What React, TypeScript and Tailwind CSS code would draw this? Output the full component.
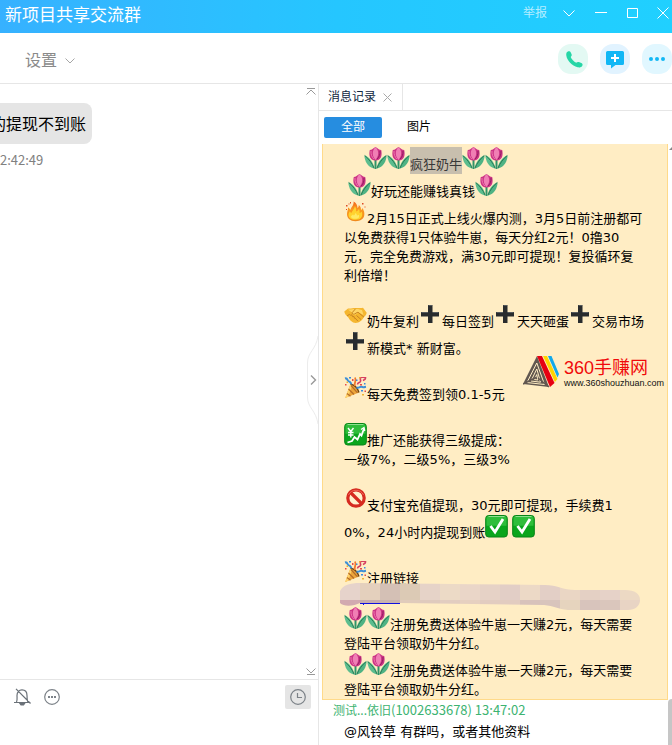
import { Fragment, type ReactNode } from "react";

type EmojiName = "tulip" | "fire" | "handshake" | "plus" | "party" | "chart" | "ban" | "check";

const E = "block h-[23px] w-[23px] shrink-0";

function Tulip() {
  return (
    <svg viewBox="0 1 23 23" className={E}>
      <path d="M11.500 12v11" stroke="#2f9468" strokeWidth="2" />
      <path d="M.3 9.200c.5 6 3 11.500 10 13.500C9.900 17 5.500 11 .3 9.200z" fill="#5cbd8e" />
      <path d="M22.700 9.200c-.5 6-3 11.500-10 13.500.4-5.700 4.800-11.700 10-13.500z" fill="#4fb384" />
      <path d="M.8 9.600c4 3.400 7.200 7.400 9.200 12.400M22.200 9.600c-4 3.400-7.200 7.400-9.200 12.400" stroke="#287a55" fill="none" />
      <path d="M5.800 4C8 4 9 2.500 11.500 1 14 2.500 15 4 17.200 4c1 4.500.6 10.500-5.700 10.500S4.800 8.500 5.800 4z" fill="#cc3485" />
      <path d="M11.500 1.300c3.600 3.200 3.600 8.500 0 12.700-3.600-4.200-3.600-9.500 0-12.700z" fill="#f07fb4" />
      <path d="M7 5C6.700 8 7.800 11 9.800 13" stroke="#ee77ae" fill="none" />
      <path d="M16 5c.3 3-.8 6-2.800 8" stroke="#8f1e60" fill="none" />
    </svg>
  );
}

function Fire() {
  return (
    <svg viewBox="0 1 23 23" className={E}>
      <defs>
        <linearGradient id="flame" x1="0" y1="0" x2="0" y2="1">
          <stop offset="0" stopColor="#f0641e" />
          <stop offset=".4" stopColor="#fb9a1f" />
          <stop offset="1" stopColor="#f08a1c" />
        </linearGradient>
      </defs>
      <path d="M3 14c0-2.500 1.200-3.800 1-6.500 1.500.8 2 1.500 2.300 2.500C7 7 10 5.500 9.600 1.500 12.500 3 13.500 5.500 13.500 8c.8-.5 1.300-1.500 1.300-3 2 1.500 2.200 3.300 2.200 5 .8-.4 1.300-1 1.600-2 1.400 2.800 2 4.500 1.700 7-.6 4-3.700 6.200-8.800 6.200S3 18.500 3 14z" fill="url(#flame)" />
      <path d="M4.500 15c0-1.700.8-2.600 1.300-3.800.8.600 1 1.200 1.300 2C8.200 11 10.700 8.700 10.900 6c1.300 1.800 1.300 3.800 1.200 5.500 1.400-.4 2.300-1.300 2.800-2.500.8 1.500.8 2.800.7 4 1-.3 1.700-.8 2.200-1.500 1.300 4.500 0 8.300-6.200 8.300-4.700 0-7-1.800-7.100-4.800z" fill="#ffd22e" />
      <path d="M7 16.500c.4-1.300 1.300-1 2-2 .4.500.6.500.7 1 1-.6 1.500-1.400 1.700-2.500 1.200.8 1.500 1.500 1.500 2.500.8-.2 1.300-.5 1.900-.8 1 2.600-.3 4.100-3.600 4.100-2.600 0-4.100-.8-4.200-2.300z" fill="#ffe964" />
      <path d="M2 5h1.500v1.500H2zM6 2h1v1.500H6zM18 3h1.500v1.500H18zM2 9h1v1H2zM20.500 6.500h1v1h-1zM4.500 3.500h1v1h-1z" fill="#dd4a24" />
    </svg>
  );
}

function Handshake() {
  return (
    <svg viewBox="0 0 23 23" className={E}>
      <path d="M.3 7.500 4 4.500c3 .3 5-.6 7.500-.5 3-.3 5 .4 7.500-.3l3.700 5c-.3 1.600-1.400 3.300-3 4.600-1.500 3.200-4.600 5.700-8 5.700-3.600-.2-6-3-7.700-6C2 11.500.5 9.500.3 7.500z" fill="#f5b62f" />
      <path d="M4 5.500c3 .3 5-.6 7.500-.5 3-.3 4.500.6 6.500 1l1.500 5-5-2.500-3 2c-1.500 1-3.300.3-3-1.400" fill="#ffd666" />
      <path d="M11.500 4.800 8 8.800c.3 1.700 2.400 1.900 4 .3l2-.9 6 5M12.500 11.500l4.500 4M10.500 13.500l3.500 3.700M3 12l2.500-1.700 1 1 1.300-.5.7 1.800 1.500-.1.500 2" stroke="#c98422" strokeWidth="1" fill="none" />
    </svg>
  );
}

function Plus() {
  return (
    <svg viewBox="0 0 23 23" className={E}>
      <path d="M9 1h4.500v7H20v4.500h-6.500v6.500H9v-6.500H2V8h7z" fill="#292c2e" />
      <path d="M9.500 1.500h3.500M2.500 8.500H9M13.500 8.500h6" stroke="#555a5d" />
    </svg>
  );
}

function Party() {
  return (
    <svg viewBox="0 1 23 23" className={E}>
      <path d="M6.500 8 1.200 22 15 16.500C13 12.500 10 9.500 6.500 8z" fill="#eda63b" />
      <path d="M6.500 8 1.200 22l3-1.200 4-11.500z" fill="#ffd36b" />
      <path d="m4.500 13 5.500 5.500M3 17.500l3.500 2.700M7 9.500l6.500 7.400" stroke="#b56c28" strokeWidth="1.200" />
      <path d="M6.500 8c4 1 7 4 8.500 8.500" stroke="#70430f" strokeWidth="1.300" fill="none" />
      <path d="M1 2.500c3-1 2 3 4 3s1 2.500 3 2M12.500 11.500c3 1.500 3-2 6-.5 1.500.5 2 0 3.500-.2" stroke="#3d8fd6" strokeWidth="2" fill="none" />
      <path d="M11 10c-1.500-4 2-4 0-8.500" stroke="#f07a2d" strokeWidth="1.800" fill="none" />
      <path d="M13.500 8.500c0-3 4-1 3-4.500s2-3 5-2.500c.5 2-1.500 2.500-2.500 3" stroke="#d63f62" strokeWidth="1.600" fill="none" />
      <path d="M5 1h2v1.500H5zM12 3.500h1.500V5H12zM20 7h1.500v1.500H20zM17 14h2v1.500h-2z" fill="#3a8add" />
      <path d="M8 3h1.500v2H8zM16 8h2v1.500h-2zM20.500 14.500H22V16h-1.500zM1 8h1.500v1.500H1z" fill="#e64a4a" />
      <path d="M18 18h2v1.500h-2zM2.500 5.500H4V7H2.500zM15 1h1.500v1.500H15z" fill="#efb332" />
    </svg>
  );
}

function GreenTile({ children }: { children: ReactNode }) {
  return (
    <svg viewBox="0 0 23 23" className={E} fill="none">
      <rect x=".7" y=".5" width="21.600" height="21.500" rx="3" fill="#0aa51c" stroke="#078417" />
      <path d="M3 1.300h17a1.500 1.500 0 0 1 1.500 1.500v8h-20v-8A1.500 1.500 0 0 1 3 1.300z" fill="#2fbd3b" />
      <path d="M3.500 1.500h16" stroke="#8ee08f" />
      {children}
    </svg>
  );
}

function Ban() {
  return (
    <svg viewBox="0 0 23 23" className={E}>
      <circle cx="12" cy="10" r="8.200" fill="#fff0cd" stroke="#d62a20" strokeWidth="3.200" />
      <path d="m6.500 4.500 11 11" stroke="#d62a20" strokeWidth="3.200" />
      <path d="M4.500 7a8.300 8.300 0 0 1 15 0" stroke="#f0665a" fill="none" />
    </svg>
  );
}

function Emoji({ name }: { name: EmojiName }) {
  switch (name) {
    case "tulip":
      return <Tulip />;
    case "fire":
      return <Fire />;
    case "handshake":
      return <Handshake />;
    case "plus":
      return <Plus />;
    case "party":
      return <Party />;
    case "ban":
      return <Ban />;
    case "chart":
      return (
        <GreenTile>
          <path d="m4 5 2.800 3.500L9.500 5M6.800 8.500v6M4 9.500h5.500M4 12h5.500" stroke="#fff" strokeWidth="1.400" />
          <path d="M3.500 19.500 8 18l2.500-4 3 2.500L16 11l1.500 1.500L20 5.500" stroke="#fff" strokeWidth="1.800" />
          <path d="m17 6.500 3-2 .8 3.500" stroke="#fff" strokeWidth="1.300" />
        </GreenTile>
      );
    case "check":
      return (
        <GreenTile>
          <path d="m5.500 11 4.500 6 8-13" stroke="#fff" strokeWidth="2.800" />
        </GreenTile>
      );
  }
}

// a string is text, { e } is an inline emoji, { mark } is selected text
type Part = string | { e: EmojiName } | { mark: string };
interface Line {
  parts: Part[];
  indent?: string;
}

const tulip: Part = { e: "tulip" };
const plus: Part = { e: "plus" };

const LINES: Line[] = [
  { parts: [tulip, tulip, { mark: "疯狂奶牛" }, tulip, tulip], indent: "pl-5" },
  { parts: [tulip, "好玩还能赚钱真钱", tulip], indent: "pl-1" },
  { parts: [{ e: "fire" }, "2月15日正式上线火爆内测，3月5日前注册都可"] },
  { parts: ["以免费获得1只体验牛崽，每天分红2元！0撸30"] },
  { parts: ["元，完全免费游戏，满30元即可提现！复投循环复"] },
  { parts: ["利倍增！"] },
  { parts: [] },
  { parts: [{ e: "handshake" }, "奶牛复利", plus, "每日签到", plus, "天天砸蛋", plus, "交易市场"] },
  { parts: [plus, "新模式* 新财富。"] },
  { parts: [] },
  { parts: [{ e: "party" }, "每天免费签到领0.1-5元"] },
  { parts: [] },
  { parts: [{ e: "chart" }, "推广还能获得三级提成："] },
  { parts: ["一级7%，二级5%，三级3%"] },
  { parts: [] },
  { parts: [{ e: "ban" }, "支付宝充值提现，30元即可提现，手续费1"] },
  { parts: ["0%，24小时内提现到账", { e: "check" }, " ", { e: "check" }] },
  { parts: [] },
  { parts: [{ e: "party" }, "注册链接"] },
  { parts: [] },
  { parts: [tulip, tulip, "注册免费送体验牛崽一天赚2元，每天需要"] },
  { parts: ["登陆平台领取奶牛分红。"] },
  { parts: [tulip, tulip, "注册免费送体验牛崽一天赚2元，每天需要"] },
  { parts: ["登陆平台领取奶牛分红。"] },
];

function MessageLine({ line }: { line: Line }) {
  const hasEmoji = line.parts.some((p) => typeof p !== "string" && "e" in p);
  return (
    <div className={`flex whitespace-pre ${hasEmoji ? "h-[27px]" : "h-[19px]"} ${line.indent ?? ""}`}>
      {line.parts.map((p, i) => (
        <Fragment key={i}>
          {typeof p === "string" ? (
            <span className="self-end">{p}</span>
          ) : "e" in p ? (
            <Emoji name={p.e} />
          ) : (
            <mark className="flex items-end bg-[#c8bfae] text-[#383838]">{p.mark}</mark>
          )}
        </Fragment>
      ))}
    </div>
  );
}

const MOSAIC_TOP = ["#e6d3cb", "#e4d0bd", "#d4c0b5", "#dccab5", "#e6d3c8", "#ecdac6", "#ead6c8", "#e6d2c6", "#e2cec6", "#ecd9c6", "#e3cfc6", "#ead6c4", "#e4d0c4", "#e6d2c8", "#ecd9c4"];
const MOSAIC_BOTTOM = ["#d2aab0", "#c8aeae", "#c9b3ae", "#e0cbbb", "#dfcabd", "#e2cdc0", "#e6d0c0", "#e2ccc0", "#e2ccc0", "#d8c2bb", "#d8c4bc", "#e6d4be", "#d8c4bc", "#dac6bc", "#e8d4c4"];

function LinkMosaic() {
  return (
    <svg viewBox="0 0 300 29" className="absolute left-[17px] top-[439px] h-[29px] w-[300px]">
      <clipPath id="smear">
        <path d="M0 8C3 2 10 0 20 0 80 1 140 1 205 2c12 0 18 5 30 5h50c10 0 15 4 15 10s-5 10-12 10h-60c-10-1-14-4-24-5L60 20 20 20C14 23 4 24 0 20z" />
      </clipPath>
      <g clipPath="url(#smear)">
        {MOSAIC_TOP.map((c, i) => (
          <rect key={i} x={i * 20} y="0" width="20" height="17" fill={c} />
        ))}
        {MOSAIC_BOTTOM.map((c, i) => (
          <rect key={i} x={i * 20} y="17" width="20" height="12" fill={c} />
        ))}
      </g>
      <path d="M20 20.500h40M23.500 20v2" stroke="#1010e0" />
    </svg>
  );
}

function Watermark() {
  return (
    <div className="absolute right-[3px] top-[211px] flex items-center gap-[5px] whitespace-nowrap">
      <svg viewBox="0 0 36 33" className="h-[33px] w-9">
        <path d="M14 1 0 29l26 3z" fill="#625850" />
        <path d="M13.800 8 4 27.500 21.500 29.500zM13.800 14 8 26l9.500 1.200zM13.800 19.500 11.300 24.500l3.500.5z" stroke="#ffedc4" strokeWidth="1" fill="none" />
        <path d="m0 29 13-6.500M26 32l-11-9" stroke="#625850" strokeWidth="1.500" />
        <path d="M14 1h5l12.500 27-4.500 4z" fill="#e60012" />
        <path d="M20 1h4l10.500 23-2.600 3z" fill="#ffd400" />
        <path d="M25 1h3.500L36 19l-1.500 3.500z" fill="#13a9ea" />
      </svg>
      <div className="flex flex-col pt-1">
        <span className="font-['Liberation_Sans','Noto_Sans_CJK_SC',sans-serif] text-[18px] leading-[19px] text-[#f00a0a]">360手赚网</span>
        <span className="font-['Liberation_Sans',sans-serif] text-[9px] leading-[10px] text-[#111]">www.360shouzhuan.com</span>
      </div>
    </div>
  );
}

function TitleBar() {
  return (
    <header className="flex h-[33px] shrink-0 items-center justify-between bg-linear-to-r from-[#36b1ff] via-[#25c6ff] to-[#20d0ff] pl-[5px] pr-[3px] text-white">
      <h1 className="pb-1 text-[17px] leading-6">新项目共享交流群</h1>
      <div className="flex items-center gap-4 pb-2">
        <button className="text-[12px] leading-4 text-[#b4edff]">举报</button>
        <button aria-label="菜单">
          <svg viewBox="0 0 12 12" className="h-3 w-3" fill="none" stroke="#fff">
            <path d="m.5 3.500 5.500 5.500 5.500-5.500" />
          </svg>
        </button>
        <button aria-label="最小化" className="ml-1">
          <svg viewBox="0 0 12 12" className="h-3 w-3" stroke="#fff">
            <path d="M0 5.500h12" />
          </svg>
        </button>
        <button aria-label="最大化" className="ml-1">
          <svg viewBox="0 0 12 12" className="h-3 w-3" fill="none" stroke="#fff">
            <path d="M.5 1.500h10v9H.5z" />
          </svg>
        </button>
        <button aria-label="关闭" className="ml-[2px]">
          <svg viewBox="0 0 12 12" className="h-3 w-3" fill="none" stroke="#fff">
            <path d="m.5.5 11 11M11.500.5l-11 11" />
          </svg>
        </button>
      </div>
    </header>
  );
}

function Toolbar() {
  return (
    <div className="flex h-[51px] shrink-0 items-center justify-between overflow-hidden border-b border-[#e6e6e6] pl-[25px]">
      <button className="flex items-center gap-2 pt-[6px] text-[16px] leading-6 text-[#8a8a8a]">
        设置
        <svg viewBox="0 0 10 6" className="h-[6px] w-[10px]" fill="none" stroke="#a6a6a6">
          <path d="m.5.5 4.500 4.500L9.500.5" />
        </svg>
      </button>
      <div className="flex gap-3 pt-[2px]">
        <button aria-label="语音通话" className="flex h-[30px] w-[30px] items-center justify-center rounded-[13px] bg-[#e3f9f3]">
          <svg viewBox="0 0 17 17" className="ml-[2px] h-[17px] w-[17px]">
            <path d="M1.500.8C2.800 0 4.200.3 4.900 1.700l.7 1.600c.4 1.100 0 1.900-.9 2.700.9 2.200 3.200 4.600 5.500 5.800.8-.8 1.700-1.100 2.700-.7l2.400 1c1.300.6 1.700 1.800.9 2.900-1.100 1.400-2.700 1.700-4.600 1.300C6 15 1 9.500.3 4.500.1 2.700.4 1.400 1.500.8z" fill="#26d6a6" />
          </svg>
        </button>
        <button aria-label="邀请" className="flex h-[30px] w-[30px] items-center justify-center rounded-[13px] bg-[#e1f3ff]">
          <svg viewBox="0 0 18 18" className="mt-[2px] h-[18px] w-[18px]">
            <path d="M1.500 0h15A1.500 1.500 0 0 1 18 1.500v11a1.500 1.500 0 0 1-1.500 1.500H9.500L5 17.500V14H1.500A1.500 1.500 0 0 1 0 12.500v-11A1.500 1.500 0 0 1 1.500 0z" fill="#12b7f5" />
            <path d="M9 3v8M5 7h8" stroke="#fff" strokeWidth="2" />
          </svg>
        </button>
        <button aria-label="更多" className="flex h-[30px] w-[30px] items-center justify-center rounded-[13px] bg-[#e1f7ff]">
          <svg viewBox="0 0 16 4" className="h-1 w-4" fill="#12b7f5">
            <circle cx="2" cy="2" r="2" />
            <circle cx="8" cy="2" r="2" />
            <circle cx="14" cy="2" r="2" />
          </svg>
        </button>
      </div>
    </div>
  );
}

function ChatPane() {
  return (
    <section className="relative flex w-[318px] shrink-0 flex-col">
      <div className="relative flex flex-1 flex-col items-start overflow-hidden pt-[19px]">
        <div className="-ml-3 rounded-lg bg-[#e5e5e5] pb-[7px] pl-[2px] pr-[6px] pt-[9px] text-[16px] leading-[25px] text-black">
          的提现不到账
        </div>
        <time className="mt-2 font-['Noto_Sans_CJK_SC',sans-serif] text-[13px] leading-4 text-[#808080]">2:42:49</time>
        <svg viewBox="0 0 10 7" className="absolute right-[2px] top-1 h-[7px] w-[10px]" fill="none" stroke="#999">
          <path d="M1 .5h8M.5 6.500 5 2l4.500 4.500" />
        </svg>
        <svg viewBox="0 0 10 7" className="absolute bottom-1 right-[2px] h-[7px] w-[10px]" fill="none" stroke="#999">
          <path d="M1 6.500h8M.5.5 5 5 9.500.5" />
        </svg>
      </div>
      <div className="flex h-[66px] shrink-0 items-start gap-3 border-t border-[#e6e6e6] pl-[14px] pr-[7px] pt-[5px]">
        <button aria-label="消息提醒" className="flex h-6 items-center">
          <svg viewBox="0 0 18 18" className="h-[18px] w-[18px]" fill="none" stroke="#6a7178" strokeWidth="1.200">
            <path d="M0 14.500h16.500M2.500 14C3.500 12 3 10 3 7.500 3 4 5 1.800 8 1.800s5 2.200 5 5.700c0 2.500 0 4.500.8 6.500M2 .8 16.500 15.500" />
            <path d="M6 15.500h4.500l-1 1.500h-2.500z" fill="#6a7178" />
          </svg>
        </button>
        <button aria-label="更多功能" className="flex h-6 items-center">
          <svg viewBox="0 0 16 16" className="h-4 w-4" fill="none" stroke="#7c8288" strokeWidth="1.200">
            <circle cx="8" cy="8" r="7.300" />
            <path d="M4 8h2M7 8h2M10 8h2" strokeWidth="2" />
          </svg>
        </button>
        <button aria-label="消息记录" className="ml-auto flex h-6 w-[26px] items-center justify-center rounded-[2px] bg-[#e5e5e5]">
          <svg viewBox="0 0 16 16" className="h-4 w-4" fill="none" stroke="#7c8288" strokeWidth="1.200">
            <circle cx="8" cy="8" r="7.300" />
            <path d="M7.500 4v4.500H12" />
          </svg>
        </button>
      </div>
      <button aria-label="收起" className="absolute right-0 top-[252px]">
        <svg viewBox="0 0 12 88" className="h-[88px] w-3" fill="none">
          <path d="M12 0C10 14 1.500 16 1.500 27v34C1.500 72 10 74 12 88" stroke="#ececec" />
          <path d="m5 39.500 4.500 4.500L5 48.500" stroke="#999" strokeWidth="1.400" />
        </svg>
      </button>
    </section>
  );
}

function HistoryPane() {
  return (
    <section className="flex min-w-0 flex-1 flex-col border-l border-[#e6e6e6]">
      <div className="flex h-[27px] border-b border-[#e6e6e6]">
        <div className="flex items-center gap-[7px] border-r border-[#e6e6e6] pl-[9px] pr-[10px] text-[12px] text-[#0f2740]">
          消息记录
          <button aria-label="关闭标签">
            <svg viewBox="0 0 9 9" className="h-[9px] w-[9px]" fill="none" stroke="#a9a9a9">
              <path d="m.5.5 8 8M8.500.5l-8 8" />
            </svg>
          </button>
        </div>
      </div>
      <div className="flex h-[33px] items-center gap-[25px] pl-[5px] text-[12px] leading-[21px]">
        <button className="h-[21px] w-[58px] rounded-[2px] bg-[#268de0] text-white">全部</button>
        <button className="text-black">图片</button>
      </div>
      <div className="flex flex-1">
        <div className="min-w-0 flex-1 pl-[3px]">
          <article className="relative overflow-hidden border border-t-0 border-[#ffda8a] bg-[#ffedc4] pl-[21px] pt-[3px]">
            {LINES.map((line, i) => (
              <MessageLine key={i} line={line} />
            ))}
            <LinkMosaic />
            <Watermark />
          </article>
          <p className="pl-[11px] font-['Noto_Sans_CJK_SC',sans-serif] leading-5 text-[#3cb371]">
            <span className="text-[12px]">测试...依旧</span>(1002633678) 13:47:02
          </p>
          <p className="pl-[22px] pt-[2px]">@风铃草 有群吗，或者其他资料</p>
        </div>
        {/* scrollbar */}
        <div className="flex w-1 shrink-0 flex-col justify-between overflow-hidden">
          <svg viewBox="0 0 4 8" className="h-2 w-1">
            <path d="M1 6 4 3v3z" fill="#888" />
          </svg>
          <div className="h-[46px] rounded-tl-sm bg-[#c6c6c6]" />
        </div>
      </div>
    </section>
  );
}

export default function App() {
  return (
    <div className="flex min-h-screen flex-col overflow-hidden bg-white font-['DejaVu_Sans','Noto_Sans_CJK_SC',sans-serif] text-[13px] leading-[19px] text-black">
      <TitleBar />
      <Toolbar />
      <main className="flex flex-1">
        <ChatPane />
        <HistoryPane />
      </main>
    </div>
  );
}
